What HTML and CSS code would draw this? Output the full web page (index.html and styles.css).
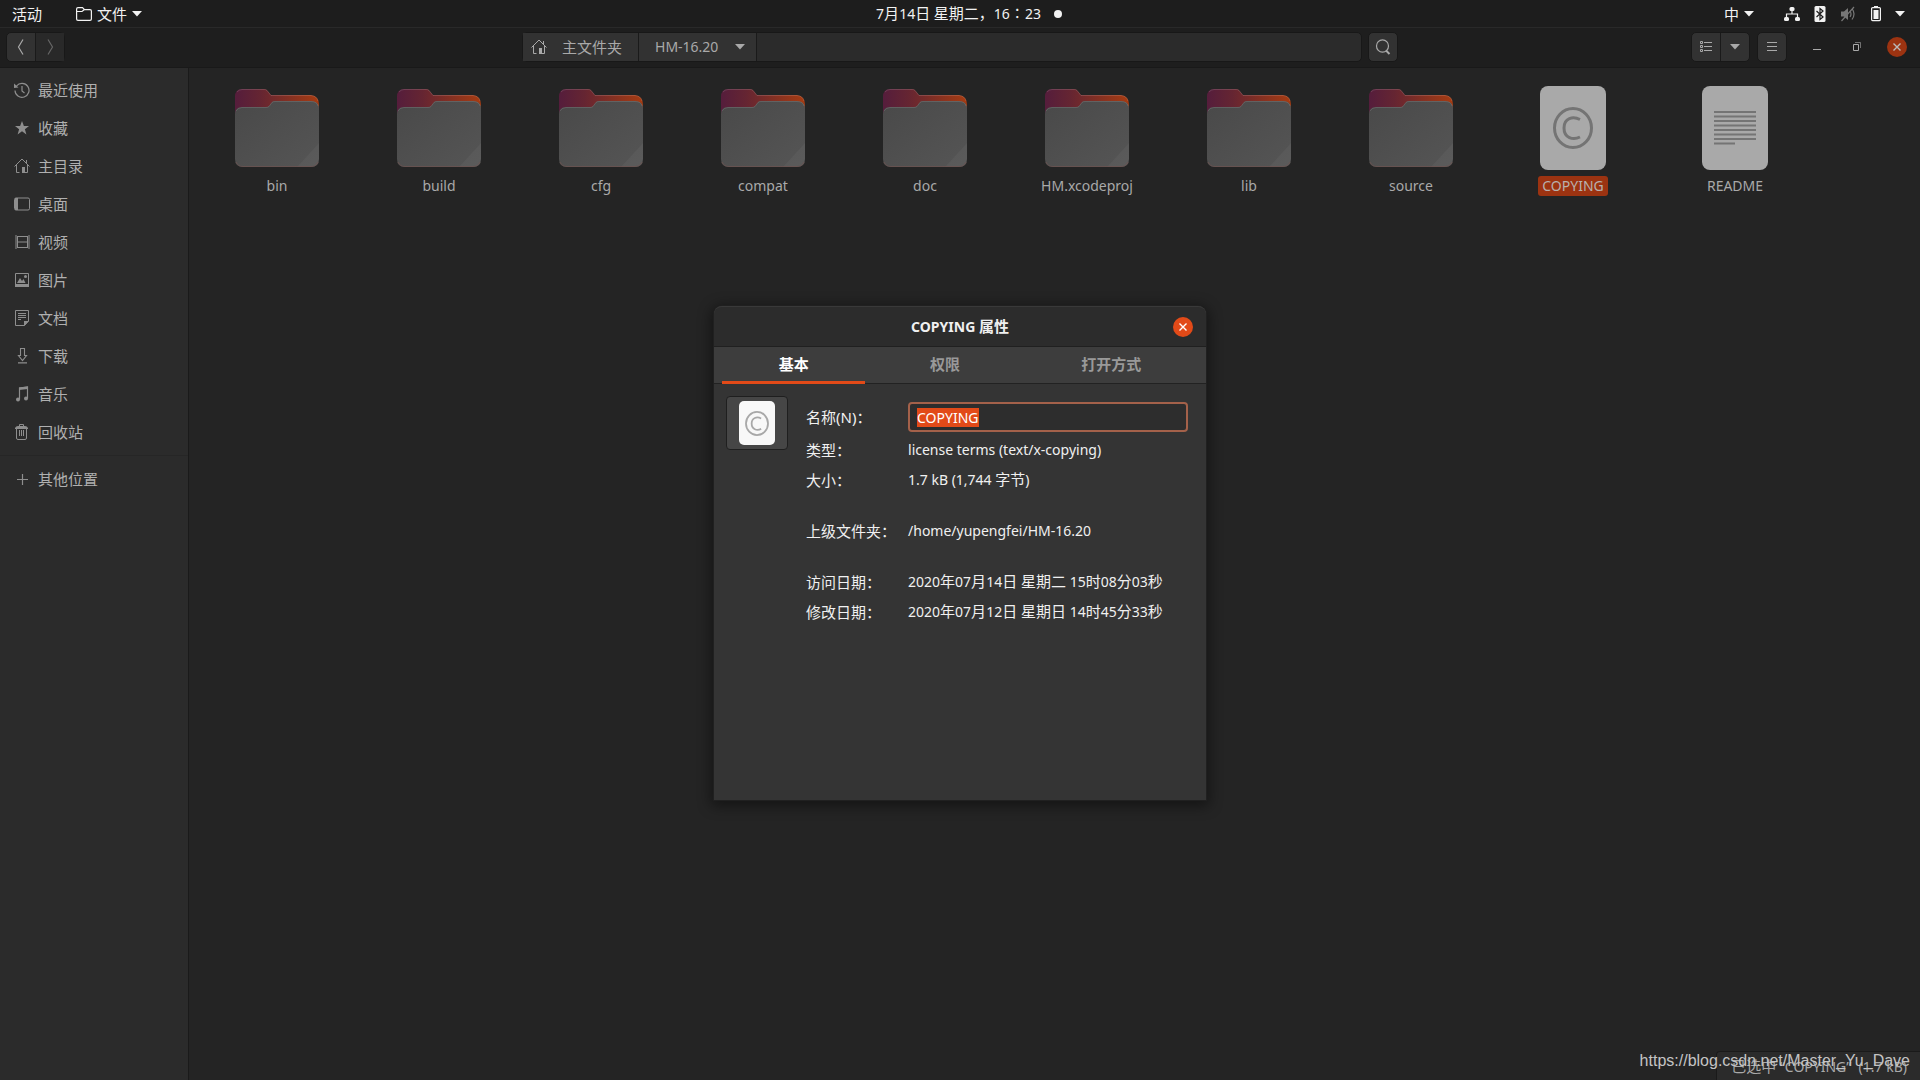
FILE: index.html
```html
<!DOCTYPE html>
<html lang="zh-CN">
<head>
<meta charset="utf-8">
<title>HM-16.20</title>
<link rel="stylesheet" href="styles.css">
</head>
<body>
<svg class="defs" aria-hidden="true">
  <defs>
    <linearGradient id="back" x1="0" y1="0" x2="1" y2="0">
      <stop offset="0" stop-color="#551d3c"/><stop offset=".3" stop-color="#652532"/><stop offset="1" stop-color="#a63c12"/>
    </linearGradient>
    <linearGradient id="front" x1="0" y1="0" x2="1" y2="1">
      <stop offset="0" stop-color="#494949"/><stop offset="1" stop-color="#555"/>
    </linearGradient>
    <symbol id="folder" viewBox="0 0 84 78">
      <path fill="url(#back)" d="M7 0H29Q31 0 32 1L36 6H76Q84 7 84 16V40H0V8Q0 0 7 0Z"/>
      <path fill="none" stroke="#fff" stroke-opacity=".14" d="M2 3Q4 .5 7 .5H29Q31 .5 32 1.5L36 6.500H76Q82 7 83 12"/>
      <path fill="url(#front)" d="M7 18H31Q33 18 34 17L37 13Q38 12 40 12H76Q84 12 84 20V70Q84 78 76 78H8Q0 78 0 70V25Q0 18 7 18Z"/>
      <path fill="none" stroke="#fff" stroke-opacity=".12" d="M1 22Q3 18.500 7 18.500H31Q33 18.500 34 17.500L37 13.500Q38 12.500 40 12.500H76Q82 12.500 83 17"/>
      <path fill="#fff" fill-opacity=".035" d="M62 78L84 54V70Q84 78 76 78Z"/>
      <path fill="none" stroke="#6b5350" stroke-opacity=".8" d="M1 73Q3 77.500 8 77.500H76Q81 77.500 83 73"/>
    </symbol>
    <symbol id="house" viewBox="0 0 16 16">
      <path fill="none" stroke="currentColor" d="M.5 8.500L8 1L15.500 8.500M2.500 7V14.500H5.500M13.500 7V14.500H11M12.500 2V5"/>
      <path fill="currentColor" d="M8 9H11V15H8Z"/>
    </symbol>
    <symbol id="down" viewBox="0 0 10 6"><path fill="currentColor" d="M0 0H10L5 5.500Z"/></symbol>
    <symbol id="cross" viewBox="0 0 8 8"><path fill="none" stroke="currentColor" stroke-width="1.400" d="M.5 .5L7.500 7.500M7.500 .5L.5 7.500"/></symbol>
    <symbol id="copyright" viewBox="0 0 40 42">
      <ellipse cx="20" cy="21" rx="18.500" ry="19.500" fill="none" stroke="currentColor" stroke-width="3"/>
      <path fill="none" stroke="currentColor" stroke-width="3" d="M27 12.500C20 9 11 11 11 21S20 33.500 27 30"/>
    </symbol>
  </defs>
</svg>

<header class="topbar">
  <div class="topbar-side">
    <button class="top-btn">活动</button>
    <button class="top-btn app-menu">
      <svg width="16" height="14" viewBox="0 0 16 14"><path fill="none" stroke="currentColor" stroke-width="1.200" d="M.6 12V2Q.6 .6 2 .6H6.500L8.500 2.600H14Q15.400 2.600 15.400 4V12Q15.400 13.400 14 13.400H2Q.6 13.400 .6 12M1 4.500H6L8.500 2.600"/></svg>
      <span>文件</span>
      <svg width="10" height="6"><use href="#down"/></svg>
    </button>
  </div>
  <button class="clock">7<span class="han">月</span>14<span class="han">日</span> <span class="han">星期二，</span>16<span class="han">∶</span>23<span class="notice-dot"></span></button>
  <div class="topbar-side topbar-right">
    <button class="top-btn input-menu">中 <svg width="10" height="6"><use href="#down"/></svg></button>
    <button class="top-btn system-menu" aria-label="系统">
      <svg width="16" height="16" viewBox="0 0 16 16"><path fill="none" stroke="currentColor" stroke-width="1.200" d="M8 4V8M2.500 12V8H13.500V12"/><rect x="5.500" y="1" width="5" height="4" rx="1.500" fill="currentColor"/><rect x="0" y="11" width="5" height="4" rx="1.500" fill="currentColor"/><rect x="11" y="11" width="5" height="4" rx="1.500" fill="currentColor"/></svg>
      <svg width="16" height="16" viewBox="0 0 16 16"><rect x="2.500" width="11" height="16" rx="1.500" fill="currentColor"/><path fill="none" stroke="#1d1d1d" stroke-width="1.200" d="M4.500 5L11 11L8 13.500V2.500L11 5L4.500 11"/></svg>
      <svg class="muted" width="16" height="16" viewBox="0 0 16 16"><path fill="currentColor" d="M1 5.500H4L8 2V14L4 10.500H1Z"/><path fill="none" stroke="currentColor" stroke-width="1.200" d="M10 5Q12 8 10 11M12 2.500Q16 8 12 13.500M1.500 15L14 1"/></svg>
      <svg width="16" height="16" viewBox="0 0 16 16"><path fill="currentColor" d="M6 0H10V2H6ZM5.500 4H10.500V13H5.500Z"/><rect x="3.600" y="1.600" width="8.800" height="13" rx="1" fill="none" stroke="currentColor" stroke-width="1.200"/></svg>
      <svg width="10" height="6"><use href="#down"/></svg>
    </button>
  </div>
</header>

<main class="window">
  <header class="headerbar">
    <nav class="linked nav-buttons">
      <button class="tool" aria-label="后退"><svg width="8" height="16" viewBox="0 0 8 16"><path fill="none" stroke="currentColor" stroke-width="1.200" d="M6 .5L1.500 8L6 15.500"/></svg></button>
      <button class="tool off" aria-label="前进"><svg width="8" height="16" viewBox="0 0 8 16"><path fill="none" stroke="currentColor" stroke-width="1.200" d="M2 .5L6.500 8L2 15.500"/></svg></button>
    </nav>
    <div class="location">
      <div class="pathbar">
        <button class="crumb crumb-home"><svg width="16" height="16"><use href="#house"/></svg>主文件夹</button>
        <button class="crumb crumb-current">HM-16.20<svg width="10" height="6"><use href="#down"/></svg></button>
      </div>
      <button class="tool boxed" aria-label="搜索"><svg width="16" height="16" viewBox="0 0 16 16"><ellipse cx="7.500" cy="7" rx="6" ry="6.200" fill="none" stroke="currentColor" stroke-width="1.200"/><path stroke="currentColor" stroke-width="2" d="M11 11.500L14.500 15"/></svg></button>
    </div>
    <div class="window-tools">
      <div class="linked">
        <button class="tool" aria-label="列表视图"><svg width="12" height="12" viewBox="0 0 12 12"><path fill="none" stroke="currentColor" d="M.5 .5H2.500V2.500H.5ZM.5 4.500H2.500V6.500H.5ZM.5 8.500H2.500V10.500H.5ZM4 1.500H12M4 5.500H12M4 9.500H12"/></svg></button>
        <button class="tool" aria-label="视图选项"><svg width="10" height="6"><use href="#down"/></svg></button>
      </div>
      <button class="tool boxed" aria-label="菜单"><svg width="10" height="10" viewBox="0 0 10 10"><path stroke="currentColor" d="M0 .5H10M0 4.500H10M0 8.500H10"/></svg></button>
      <div class="window-controls">
        <button class="control" aria-label="最小化"><svg width="8" height="8" viewBox="0 0 8 8"><path stroke="currentColor" d="M0 6.500H8"/></svg></button>
        <button class="control" aria-label="还原"><svg width="8" height="9" viewBox="0 0 8 9"><path fill="none" stroke="currentColor" d="M.5 2.500H5.500V8.500H.5Z"/><path fill="none" stroke="currentColor" opacity=".6" d="M2 .5H7.500V6"/></svg></button>
        <button class="control close-dim" aria-label="关闭"><svg width="8" height="8"><use href="#cross"/></svg></button>
      </div>
    </div>
  </header>

  <div class="panes">
    <nav class="sidebar">
      <a class="place" href="#recent"><svg width="16" height="16" viewBox="0 0 16 16"><path fill="none" stroke="currentColor" stroke-width="1.200" d="M2.500 4A7 7 0 1 1 1 8.500M8 4V9L10.500 11"/><path fill="currentColor" d="M0 1.500L4.500 5.500L0 6Z"/></svg>最近使用</a>
      <a class="place" href="#starred"><svg width="16" height="16" viewBox="0 0 16 16"><path fill="currentColor" d="M8 1L9.900 6H15L10.900 9.200L12.400 14.500L8 11.300L3.600 14.500L5.100 9.200L1 6H6.100Z"/></svg>收藏</a>
      <a class="place" href="#home"><svg width="16" height="16"><use href="#house"/></svg>主目录</a>
      <a class="place" href="#desktop"><svg width="16" height="16" viewBox="0 0 16 16"><rect x=".5" y="2" width="15" height="12" rx="1.500" fill="none" stroke="currentColor"/><path fill="currentColor" d="M1 2H4V14H1Z"/></svg>桌面</a>
      <a class="place" href="#videos"><svg width="16" height="16" viewBox="0 0 16 16"><path fill="none" stroke="currentColor" d="M3.500 2V14M13.500 2V14M3 2.500H14M3 8H14M3 13.500H14"/><path stroke="currentColor" stroke-width="2" stroke-dasharray="1 1" d="M2 1.500V15M15 1.500V15"/></svg>视频</a>
      <a class="place" href="#pictures"><svg width="16" height="16" viewBox="0 0 16 16"><path fill="none" stroke="currentColor" d="M1.500 1.500H14.500V14H1.500Z"/><path fill="currentColor" d="M1 12H15V15H1ZM3 11L6 6L8 9L9.500 7L11.500 11Z"/><circle cx="11.500" cy="4.500" r="1.500" fill="currentColor"/></svg>图片</a>
      <a class="place" href="#documents"><svg width="16" height="16" viewBox="0 0 16 16"><path fill="none" stroke="currentColor" d="M1.500 .5H14.500V11L10.500 15.500H1.500ZM4 3.500H12M4 5.500H12M4 7.500H12M4 9.500H7"/><path fill="currentColor" d="M10 16V11H15Z"/></svg>文档</a>
      <a class="place" href="#downloads"><svg width="16" height="16" viewBox="0 0 16 16"><path fill="none" stroke="currentColor" stroke-width="1.100" d="M6.500 .5H10.500V7.500H12.500L8.500 12.500L4.500 7.500H6.500ZM4 14.900H13"/></svg>下载</a>
      <a class="place" href="#music"><svg width="16" height="16" viewBox="0 0 16 16"><path fill="none" stroke="currentColor" stroke-width="1.200" d="M5.500 13.500V2L13.500 1V12.500"/><path fill="currentColor" d="M5 1.500L14 .5V3L5 4Z"/><circle cx="4" cy="13.500" r="2" fill="currentColor"/><circle cx="12" cy="12.500" r="2" fill="currentColor"/></svg>音乐</a>
      <a class="place" href="#trash"><svg width="16" height="16" viewBox="0 0 16 16"><path fill="none" stroke="currentColor" d="M2.500 5V14Q2.500 15.500 4 15.500H11Q12.500 15.500 12.500 14V5M5.500 6V12M7.500 6V12M9.500 6V12M5.500 2V.5H9.500V2"/><path fill="currentColor" d="M1 4Q2 2 4 2H11Q13 2 14 4V5H1Z"/></svg>回收站</a>
      <hr class="divider">
      <a class="place" href="#other"><svg width="16" height="16" viewBox="0 0 16 16"><path stroke="currentColor" stroke-width="1.200" d="M3 8.500H14M8.500 3V14"/></svg>其他位置</a>
    </nav>

    <section class="content">
      <div class="icon-grid">
        <button class="file"><span class="thumb"><svg width="84" height="78"><use href="#folder"/></svg></span><span class="file-name">bin</span></button>
        <button class="file"><span class="thumb"><svg width="84" height="78"><use href="#folder"/></svg></span><span class="file-name">build</span></button>
        <button class="file"><span class="thumb"><svg width="84" height="78"><use href="#folder"/></svg></span><span class="file-name">cfg</span></button>
        <button class="file"><span class="thumb"><svg width="84" height="78"><use href="#folder"/></svg></span><span class="file-name">compat</span></button>
        <button class="file"><span class="thumb"><svg width="84" height="78"><use href="#folder"/></svg></span><span class="file-name">doc</span></button>
        <button class="file"><span class="thumb"><svg width="84" height="78"><use href="#folder"/></svg></span><span class="file-name">HM.xcodeproj</span></button>
        <button class="file"><span class="thumb"><svg width="84" height="78"><use href="#folder"/></svg></span><span class="file-name">lib</span></button>
        <button class="file"><span class="thumb"><svg width="84" height="78"><use href="#folder"/></svg></span><span class="file-name">source</span></button>
        <button class="file selected"><span class="thumb"><span class="sheet"><svg width="40" height="42"><use href="#copyright"/></svg></span></span><span class="file-name">COPYING</span></button>
        <button class="file"><span class="thumb"><span class="sheet"><svg width="42" height="36" viewBox="0 0 42 36"><path stroke="currentColor" stroke-width="2" d="M0 2H42M0 6.500H42M0 11H42M0 15.500H42M0 20H42M0 24.500H42M0 29H42M0 33.500H21"/></svg></span></span><span class="file-name">README</span></button>
      </div>
      <div class="statusbar"><span class="han">已选中</span> “COPYING”  (1.7 kB)</div>
      <div class="watermark">https://blog.csdn.net/Master_Yu_Dave</div>
    </section>
  </div>

  <div class="dialog-layer">
    <section class="dialog" role="dialog" aria-labelledby="dialog-title">
      <header class="dialog-title">
        <h1 id="dialog-title">COPYING <span class="han">属性</span></h1>
        <button class="dialog-close" aria-label="关闭"><svg width="8" height="8"><use href="#cross"/></svg></button>
      </header>
      <div class="tabs" role="tablist">
        <button class="tab active" role="tab" aria-selected="true">基本</button>
        <button class="tab" role="tab">权限</button>
        <button class="tab" role="tab">打开方式</button>
      </div>
      <div class="dialog-body">
        <button class="emblem" aria-label="图标"><span class="emblem-sheet"><svg width="24" height="25"><use href="#copyright"/></svg></span></button>
        <div class="props">
          <label class="key" for="name">名称(N)：</label>
          <input class="entry" id="name" type="text" value="COPYING">
          <span class="key">类型：</span><span class="value">license terms (text/x-copying)</span>
          <span class="key">大小：</span><span class="value">1.7 kB (1,744 <span class="han">字节</span>)</span>
          <span class="key spaced">上级文件夹：</span><span class="value spaced">/home/yupengfei/HM-16.20</span>
          <span class="key spaced">访问日期：</span><span class="value spaced">2020<span class="han">年</span>07<span class="han">月</span>14<span class="han">日 星期二</span> 15<span class="han">时</span>08<span class="han">分</span>03<span class="han">秒</span></span>
          <span class="key">修改日期：</span><span class="value">2020<span class="han">年</span>07<span class="han">月</span>12<span class="han">日 星期日</span> 14<span class="han">时</span>45<span class="han">分</span>33<span class="han">秒</span></span>
        </div>
      </div>
    </section>
  </div>
</main>
<script src="script.js"></script>
</body>
</html>
```
FILE: styles.css
```css
* { box-sizing: border-box; }

body {
  margin: 0;
  min-height: 100vh;
  display: flex;
  flex-direction: column;
  background: #242424;
  color: #a9a9a9;
  font: 14px/20px "Noto Sans", "Noto Sans CJK SC", sans-serif;
}

button {
  margin: 0;
  padding: 0;
  border: 0;
  background: none;
  color: inherit;
  font: inherit;
}

svg { flex: none; display: block; }
.defs { position: absolute; width: 0; height: 0; }

/* Chinese glyphs run one size larger than the Latin text beside them */
.han { font-size: 15px; line-height: 1; }

/* Top bar */
.topbar {
  display: grid;
  grid-template-columns: 1fr auto 1fr;
  align-items: center;
  height: 28px;
  padding: 0 15px 0 12px;
  background: #1d1d1d;
  border-bottom: 1px solid #292929;
  color: #f2f2f2;
}
.topbar-side { display: flex; align-items: center; gap: 34px; font-size: 15px; }
.topbar-right { justify-content: flex-end; gap: 30px; }
.top-btn { display: flex; align-items: center; gap: 5px; }
.system-menu { gap: 12px; }
.system-menu svg:last-child { margin-left: -1px; }
.clock { position: relative; white-space: nowrap; }
.notice-dot {
  position: absolute;
  right: -21px;
  top: 6px;
  width: 8px;
  height: 8px;
  border-radius: 50%;
  background: #f2f2f2;
}
.muted { color: #777; }

/* File manager window */
.window {
  position: relative;
  flex: 1;
  display: flex;
  flex-direction: column;
}
.headerbar {
  display: grid;
  grid-template-columns: 1fr minmax(0, 876px) 1fr;
  align-items: center;
  height: 40px;
  padding: 0 6px 2px;
  background: #1e1e1e;
  border-bottom: 1px solid #191919;
}
.linked { display: flex; justify-self: start; border: 1px solid #181818; border-radius: 5px; background: #323232; }
.tool {
  display: flex;
  align-items: center;
  justify-content: center;
  width: 28px;
  height: 28px;
}
.linked .tool + .tool { width: 29px; border-left: 1px solid #1a1a1a; }
.off { background: #292929; color: #666; }
.boxed { width: 30px; height: 30px; border: 1px solid #181818; border-radius: 5px; background: #323232; }
.location { display: flex; gap: 6px; }
.pathbar {
  flex: 1;
  display: flex;
  height: 30px;
  border: 1px solid #181818;
  border-radius: 5px;
  background: #2b2b2b;
}
.crumb { display: flex; align-items: center; padding: 0 16px; background: #323232; border-right: 1px solid #1a1a1a; }
.crumb-home { gap: 15px; padding-left: 8px; font-size: 15px; }
.crumb-current { gap: 17px; padding-right: 11px; }
.window-tools { display: flex; justify-content: flex-end; align-items: center; gap: 7px; padding-right: 7px; }
.window-controls { display: flex; gap: 20px; margin-left: 13px; }
.control { display: flex; align-items: center; justify-content: center; width: 20px; height: 20px; border-radius: 50%; }
.close-dim { background: #9c3311; color: #bbb; }

.panes { flex: 1; display: flex; }
.sidebar {
  flex: none;
  width: 189px;
  padding-top: 3px;
  background: #2b2b2b;
  border-right: 1px solid #1a1a1a;
}
.place {
  display: flex;
  align-items: center;
  gap: 8px;
  height: 38px;
  padding-left: 14px;
  color: #b0b0b0;
  font-size: 15px;
  text-decoration: none;
}
.place svg { color: #8e8e8e; }
.divider { margin: 4px 0; border: 0; border-top: 1px solid #262626; }

.content { position: relative; flex: 1; min-width: 0; }
.icon-grid {
  display: grid;
  grid-template-columns: repeat(auto-fill, 162px);
  row-gap: 24px;
  padding: 18px 7px;
}
.file { display: flex; flex-direction: column; align-items: center; gap: 6px; }
.thumb { display: flex; align-items: center; height: 84px; }
.sheet {
  display: flex;
  align-items: center;
  justify-content: center;
  width: 66px;
  height: 84px;
  border-radius: 8px;
  background: #a9a9a9;
  color: #747474;
}
.file-name { padding: 0 4px; border-radius: 3px; }
.selected .file-name { background: #9c3311; color: #b8b0ad; }

.statusbar {
  position: absolute;
  right: 0;
  bottom: 0;
  height: 29px;
  padding: 5px 13px 0 14px;
  border: 1px solid #1a1a1a;
  border-width: 1px 0 0 1px;
  border-radius: 4px 0 0 0;
  background: #2b2b2b;
  white-space: pre;
}
.watermark {
  position: absolute;
  right: 10px;
  bottom: 9px;
  color: #c4c4c4;
  font: 16px/20px "Liberation Sans", Arial, sans-serif;
}

/* Properties dialog */
.dialog-layer {
  position: absolute;
  inset: 0;
  display: flex;
  align-items: center;
  justify-content: center;
  padding-bottom: 2px;
}
.dialog {
  width: 492px;
  min-height: 494px;
  border-radius: 8px 8px 0 0;
  background: #343434;
  color: #f0f0f0;
  box-shadow: 0 0 0 1px #202020, 0 3px 14px 3px rgba(0, 0, 0, .45);
}
.dialog-title {
  display: grid;
  grid-template-columns: 1fr auto 1fr;
  align-items: center;
  height: 41px;
  padding: 0 13px;
  border-radius: 8px 8px 0 0;
  border-top: 1px solid #393939;
  border-bottom: 1px solid #202020;
  background: #2c2c2c;
}
.dialog-title h1 { grid-column: 2; margin: 0; font-size: 14px; font-weight: 700; }
.dialog-close {
  justify-self: end;
  display: flex;
  align-items: center;
  justify-content: center;
  width: 20px;
  height: 20px;
  border-radius: 50%;
  background: #e24a18;
  color: #fff;
}
.tabs {
  display: flex;
  gap: 8px;
  height: 37px;
  padding: 0 8px;
  background: #3d3d3d;
  border-bottom: 1px solid #222;
}
.tab { flex: 1 1 auto; height: 37px; border-bottom: 3px solid transparent; color: #999; font-size: 15px; font-weight: 700; }
.tab.active { color: #fff; border-color: #e24a18; }
.dialog-body { display: flex; align-items: flex-start; gap: 18px; padding: 12px 18px 18px 12px; }
.emblem {
  display: flex;
  align-items: center;
  justify-content: center;
  width: 62px;
  height: 54px;
  border: 1px solid #1f1f1f;
  border-radius: 4px;
  background: #464646;
}
.emblem-sheet {
  display: flex;
  align-items: center;
  justify-content: center;
  width: 36px;
  height: 44px;
  border-radius: 5px;
  background: #f8f8f8;
  color: #a8a8a8;
}
.props {
  flex: 1;
  display: grid;
  grid-template-columns: auto 1fr;
  align-items: center;
  gap: 6px 12px;
  padding-top: 6px;
  line-height: 24px;
}
.key { font-size: 15px; }
.spaced { margin-top: 21px; }
.entry {
  width: 100%;
  min-width: 0;
  height: 30px;
  padding: 0 7px;
  border: 2px solid #a4614a;
  border-radius: 4px;
  outline: 0;
  background: #2d2d2d;
  color: #fff;
  font: inherit;
}
.entry::selection { background: #e24a18; color: #fff; }
```
FILE: script.js
```js
const nameEntry = document.getElementById("name");
nameEntry.focus();
nameEntry.select();
```
